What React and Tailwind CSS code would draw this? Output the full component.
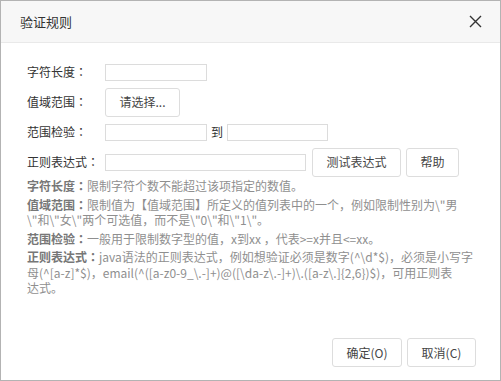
import React from "react";

const font = { fontFamily: '"Noto Sans CJK SC", "Noto Sans", sans-serif' };

// centred full-width colon, as in the reference
const Colon = () => (
  <span className="font-['Noto_Sans_CJK_JP',sans-serif]">：</span>
);

const Input = ({ className = "" }) => (
  <input
    type="text"
    className={`h-[17px] border border-[#dcdcdc] bg-white outline-none ${className}`}
  />
);

const Btn = ({ children, className = "" }) => (
  <button
    className={`h-[29px] rounded-[3px] border border-[#dddddd] bg-white text-[12px] text-[#444] ${className}`}
  >
    {children}
  </button>
);

const Row = ({ label, children }) => (
  <div className="flex h-[30px] items-center">
    <span className="w-[78px] shrink-0 text-[12px] text-[#333]">
      {label}
      <Colon />
    </span>
    {children}
  </div>
);

const Help = ({ title, children }) => (
  <p className="mb-[3px] whitespace-nowrap leading-[15.5px]">
    <b className="font-bold text-[#777]">
      {title}
      <Colon />
    </b>
    {children}
  </p>
);

export default function App() {
  return (
    <div
      style={font}
      className="flex h-[381px] w-[501px] flex-col border border-[#b3b3b3] bg-white"
    >
      {/* Header */}
      <div className="flex h-[42px] shrink-0 items-center justify-between border-b border-[#e9e9e9] bg-[#f7f7f7] pl-[19px] pr-[18px]">
        <span className="text-[13px] text-[#333]">验证规则</span>
        <svg width="13" height="13" viewBox="0 0 13 13" className="text-[#333]">
          <path d="M1 1L12 12M12 1L1 12" stroke="currentColor" strokeWidth="1.4" />
        </svg>
      </div>

      {/* Body */}
      <div className="flex-1 pl-[26px] pr-[30px] pt-[14px]">
        <Row label="字符长度">
          <Input className="w-[102px]" />
        </Row>
        <Row label="值域范围">
          <Btn className="w-[75px]">请选择...</Btn>
        </Row>
        <Row label="范围检验">
          <Input className="w-[102px]" />
          <span className="ml-[4px] mr-[4px] text-[12px] text-[#333]">到</span>
          <Input className="w-[101px]" />
        </Row>
        <Row label="正则表达式">
          <Input className="w-[201px]" />
          <Btn className="ml-[6px] w-[89px]">测试表达式</Btn>
          <Btn className="ml-[5px] w-[53px]">帮助</Btn>
        </Row>

        <div className="mt-[1px] text-[12px] text-[#8f8f8f]">
          <Help title="字符长度">限制字符个数不能超过该项指定的数值。</Help>
          <Help title="值域范围">
            限制值为【值域范围】所定义的值列表中的一个，例如限制性别为\"男
            <br />
            \"和\"女\"两个可选值，而不是\"0\"和\"1\"。
          </Help>
          <Help title="范围检验">一般用于限制数字型的值，x到xx ，代表&gt;=x并且&lt;=xx。</Help>
          <Help title="正则表达式">
            java语法的正则表达式，例如想验证必须是数字(^\d*$)，必须是小写字
            <br />
            母(^[a-z]*$)，email(^([a-z0-9_\.-]+)@([\da-z\.-]+)\.([a-z\.]{"{2,6}"})$)，可用正则表
            <br />
            达式。
          </Help>
        </div>
      </div>

      {/* Footer */}
      <div className="flex shrink-0 justify-end gap-[5px] pb-[13px] pr-[24px]">
        <Btn className="w-[70px]">确定(O)</Btn>
        <Btn className="w-[69px]">取消(C)</Btn>
      </div>
    </div>
  );
}
